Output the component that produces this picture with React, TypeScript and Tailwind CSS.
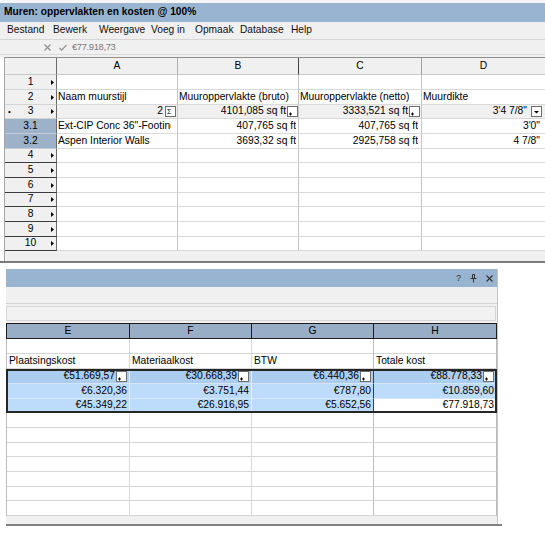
import React from "react";

type BoxKind = "sum" | "plus" | "down";

const Box = ({ kind, className = "" }: { kind: BoxKind; className?: string }) => (
  <span className={`shrink-0 w-[11px] h-[11px] border border-[#6e6e6e] bg-white flex ${className}`}>
    {kind === "sum" && <span className="text-[7px] leading-none pl-[1px] pt-[1px]">Σ</span>}
    {kind === "plus" && (
      <svg width="9" height="9" viewBox="0 0 9 9">
        <path d="M2.5 5.5v3M1 7h3" stroke="#000" strokeWidth="1" />
      </svg>
    )}
    {kind === "down" && (
      <svg width="9" height="9" viewBox="0 0 9 9">
        <path d="M2 4h5l-2.5 2.5z" fill="#000" />
      </svg>
    )}
  </span>
);

const Arrow = () => (
  <svg width="3" height="5" viewBox="0 0 3 5">
    <path d="M0 0l3 2.5L0 5z" fill="#000" />
  </svg>
);

const menu = [
  ["Bestand", "w-[46px]"],
  ["Bewerk", "w-[46px]"],
  ["Weergave", "w-[52px]"],
  ["Voeg in", "w-[44px]"],
  ["Opmaak", "w-[45px]"],
  ["Database", "w-[51px]"],
  ["Help", "w-[30px]"],
];

const rowH = (i: number) => (i % 3 === 2 ? "h-[14px]" : "h-[15px]");

type TopKind = "normal" | "summary" | "sub" | "lower";

interface TopRowProps {
  i: number;
  label: string;
  kind: TopKind;
  bullet?: boolean;
  children?: React.ReactNode;
}

const TopRow = ({ i, label, kind, bullet, children }: TopRowProps) => {
  const head =
    kind === "sub"
      ? "bg-[#9db2c9] border-b-[#c3ccd8]"
      : kind === "lower"
      ? "bg-[#f0f0f0] border-b-[#3c3c3c]"
      : "bg-[#f0f0f0] border-b-[#d4d4d4]";
  return (
    <div className={`flex ${rowH(i)}`}>
      <div className={`w-[52px] flex items-center border-b border-r border-r-[#6a6a6a] ${head}`}>
        <span className="w-[10px] pl-[3px] text-[8px] leading-none">{bullet ? "•" : ""}</span>
        <span className="flex-1 text-center">{label}</span>
        <span className="w-[10px] flex justify-end pr-[2px]">{kind !== "sub" && <Arrow />}</span>
      </div>
      {children ?? (
        <>
          <Cell w="w-[121px]" />
          <Cell w="w-[121px]" />
          <Cell w="w-[123px]" />
          <Cell w="w-[123px]" last />
        </>
      )}
    </div>
  );
};

interface CellProps {
  w: string;
  right?: boolean;
  last?: boolean;
  bg?: string;
  pr?: string;
  children?: React.ReactNode;
}

const Cell = ({ w, right, last, bg = "bg-white", pr = "pr-[2px]", children }: CellProps) => (
  <div
    className={`${w} ${bg} flex items-center overflow-hidden whitespace-nowrap border-b border-[#d9d9d9] ${
      last ? "" : "border-r border-r-[#c6c6c6]"
    } ${right ? `justify-end ${pr}` : `pl-[1px] ${pr}`}`}
  >
    <span className="min-w-0 overflow-hidden">{children}</span>
  </div>
);

const TopWindow = () => (
  <div>
    <div className="h-[3px] bg-[#f6f6f6]" />
    <div className="h-[19px] bg-[#99b4d1] flex items-center pl-[4px] text-[10.2px] font-bold">
      Muren: oppervlakten en kosten @ 100%
    </div>
    <div className="h-[18px] bg-[#f0f0f0] border-b border-[#d6d6d6] flex items-center pl-[7px] text-[10.2px] text-[#111]">
      {menu.map(([t, w]) => (
        <span key={t} className={w}>
          {t}
        </span>
      ))}
    </div>
    <div className="h-[15px] bg-[#f0f0f0] border-b border-[#dadada] flex items-center pl-[44px] text-[#8a8a8a]">
      <svg width="7" height="7" viewBox="0 0 7 7">
        <path d="M0.5 0.5l6 6M6.5 0.5l-6 6" stroke="#8c8c8c" strokeWidth="1.1" />
      </svg>
      <svg width="8" height="7" viewBox="0 0 8 7" className="ml-[8px]">
        <path d="M0.5 3.8l2.2 2.4L7.5 0.8" stroke="#8c8c8c" strokeWidth="1.1" fill="none" />
      </svg>
      <span className="ml-[5px] text-[9.4px] tracking-[-0.35px] text-[#7a7a7a]">€77.918,73</span>
    </div>
    <div className="h-[2px] bg-[#f0f0f0]" />

    <div className="ml-[4px] border-l border-t border-l-[#a6a6a6] border-t-[#8e8e8e] text-[10.3px]">
      <div className="flex h-[17px] bg-[#f0f0f0]">
        <div className="w-[52px] border-b border-r border-b-[#c8c8c8] border-r-[#6a6a6a]" />
        <div className="w-[121px] flex items-center justify-center border-b border-r border-b-[#c8c8c8] border-r-[#b0b0b0]">A</div>
        <div className="w-[121px] flex items-center justify-center border-b border-r border-b-[#c8c8c8] border-r-[#404040]">B</div>
        <div className="w-[123px] flex items-center justify-center border-b border-r border-b-[#c8c8c8] border-r-[#a0a0a0]">C</div>
        <div className="w-[123px] flex items-center justify-center border-b border-b-[#c8c8c8]">D</div>
      </div>

      <TopRow i={0} label="1" kind="normal" />
      <TopRow i={1} label="2" kind="normal">
        <Cell w="w-[121px]">Naam muurstijl</Cell>
        <Cell w="w-[121px]">Muuroppervlakte (bruto)</Cell>
        <Cell w="w-[123px]">Muuroppervlakte (netto)</Cell>
        <Cell w="w-[123px]" last>
          Muurdikte
        </Cell>
      </TopRow>
      <TopRow i={2} label="3" kind="summary" bullet>
        <Cell w="w-[121px]" right bg="bg-[#f0f0f0]" pr="pr-[1px]">
          <span className="flex items-center">
            <span className="mr-[2px]">2</span>
            <Box kind="sum" />
          </span>
        </Cell>
        <Cell w="w-[121px]" right bg="bg-[#f0f0f0]" pr="pr-[0px]">
          <span className="flex items-center">
            <span className="mr-[1px]">4101,085 sq ft</span>
            <Box kind="plus" />
          </span>
        </Cell>
        <Cell w="w-[123px]" right bg="bg-[#f0f0f0]" pr="pr-[1px]">
          <span className="flex items-center">
            <span className="mr-[1px]">3333,521 sq ft</span>
            <Box kind="plus" />
          </span>
        </Cell>
        <Cell w="w-[123px]" right last bg="bg-[#f0f0f0]" pr="pr-[3px]">
          <span className="flex items-center">
            <span className="mr-[4px]">3'4 7/8"</span>
            <Box kind="down" />
          </span>
        </Cell>
      </TopRow>
      <TopRow i={3} label="3.1" kind="sub">
        <Cell w="w-[121px]" pr="pr-[6px]">
          Ext-CIP Conc 36"-Footing
        </Cell>
        <Cell w="w-[121px]" right>
          407,765 sq ft
        </Cell>
        <Cell w="w-[123px]" right pr="pr-[3px]">
          407,765 sq ft
        </Cell>
        <Cell w="w-[123px]" right last pr="pr-[5px]">
          3'0"
        </Cell>
      </TopRow>
      <TopRow i={4} label="3.2" kind="sub">
        <Cell w="w-[121px]">Aspen Interior Walls</Cell>
        <Cell w="w-[121px]" right>
          3693,32 sq ft
        </Cell>
        <Cell w="w-[123px]" right pr="pr-[3px]">
          2925,758 sq ft
        </Cell>
        <Cell w="w-[123px]" right last pr="pr-[5px]">
          4 7/8"
        </Cell>
      </TopRow>
      {["4", "5", "6", "7", "8", "9", "10"].map((n, k) => (
        <TopRow key={n} i={k + 5} label={n} kind="lower" />
      ))}
    </div>
    <div className="ml-[4px] h-[10px] bg-[#f0f0f0] border-l border-[#a6a6a6]" />
    <div className="h-[2px] bg-[#7a7a7a]" />
    <div className="h-[6px]" />
  </div>
);

const cols = ["w-[123px]", "w-[122px]", "w-[122px]", "w-[123px]"];

const BRow = ({ i, cells }: { i: number; cells?: string[] }) => (
  <div className={`flex ${rowH(i)} border-l border-[#bdbdbd]`}>
    {cols.map((w, k) => (
      <div
        key={k}
        className={`${w} flex items-center pl-[2px] overflow-hidden whitespace-nowrap border-r border-b border-b-[#d6d6d6] ${
          k >= 2 ? "border-r-[#bcbcbc]" : "border-r-[#d8d8d8]"
        }`}
      >
        {cells?.[k]}
      </div>
    ))}
  </div>
);

const selRows = [
  { vals: ["€51.669,57", "€30.668,39", "€6.440,36", "€88.778,33"], box: true, bg: "bg-[#abcdf0]" },
  { vals: ["€6.320,36", "€3.751,44", "€787,80", "€10.859,60"], box: false, bg: "bg-[#bddcfb]" },
  { vals: ["€45.349,22", "€26.916,95", "€5.652,56", "€77.918,73"], box: false, bg: "bg-[#bddcfb]" },
];

const BottomWindow = () => (
  <div>
    <div className="ml-[6px] w-[492px] border-r border-[#c4c4c4] bg-white">
      <div className="h-[18px] bg-[#99b4d1] flex items-center justify-end pr-[4px] text-[#303030]">
        <span className="text-[9px] leading-none">?</span>
        <svg width="7" height="9" viewBox="0 0 7 9" className="ml-[9px]">
          <path d="M2.5 0.5h2v4h-2zM0.5 4.5h6M3.5 4.5v4" stroke="#303030" strokeWidth="1" fill="none" />
        </svg>
        <svg width="7" height="7" viewBox="0 0 7 7" className="ml-[9px]">
          <path d="M0.5 0.5l6 6M6.5 0.5l-6 6" stroke="#303030" strokeWidth="1.1" />
        </svg>
      </div>
      <div className="h-[17px] bg-[#f0f0f0] border-b border-[#d2d2d2]" />
      <div className="h-[19px] bg-[#f0f0f0] pt-[2px] pb-[2px] pr-[1px]">
        <div className="h-[15px] border border-[#d6d6d6] bg-[#f2f2f2]" />
      </div>

      <div className="text-[10.3px]">
        <div className="flex h-[16px] border-t border-l border-[#1e1e1e] bg-[#98aec7]">
          {["E", "F", "G", "H"].map((c, k) => (
            <div key={c} className={`${cols[k]} flex items-center justify-center border-r border-b border-[#1e1e1e]`}>
              {c}
            </div>
          ))}
        </div>
        <BRow i={0} />
        <BRow i={1} cells={["Plaatsingskost", "Materiaalkost", "BTW", "Totale kost"]} />
        <div className="outline-2 outline-solid outline-[#262626] -outline-offset-2">
          {selRows.map((r, ri) => (
            <div key={ri} className={`flex ${rowH(ri)} border-l border-[#262626]`}>
              {r.vals.map((v, k) => {
                const active = ri === 2 && k === 3;
                return (
                  <div
                    key={k}
                    className={`${cols[k]} ${active ? "bg-white" : r.bg} flex items-center justify-end pr-[2px] overflow-hidden whitespace-nowrap border-b border-r ${
                      ri < 2 ? "border-b-[#d4e5f6]" : ""
                    } ${k === 2 ? "border-r-[#3c3c3c]" : "border-r-[#e6f0fa]"}`}
                  >
                    <span className={r.box ? "mr-[1px]" : ""}>{v}</span>
                    {r.box && <Box kind="plus" />}
                  </div>
                );
              })}
            </div>
          ))}
        </div>
        {[0, 1, 2, 3, 4, 5, 6].map((k) => (
          <BRow key={k} i={k} />
        ))}
      </div>
      <div className="h-[8px] bg-[#f0f0f0]" />
    </div>
    <div className="ml-[6px] w-[496px] h-[2px] bg-[#808080]" />
  </div>
);

export default function App() {
  return (
    <div className="w-[545px] h-[537px] overflow-hidden bg-white text-black font-['Liberation_Sans',Arial,sans-serif] leading-none">
      <TopWindow />
      <BottomWindow />
    </div>
  );
}
